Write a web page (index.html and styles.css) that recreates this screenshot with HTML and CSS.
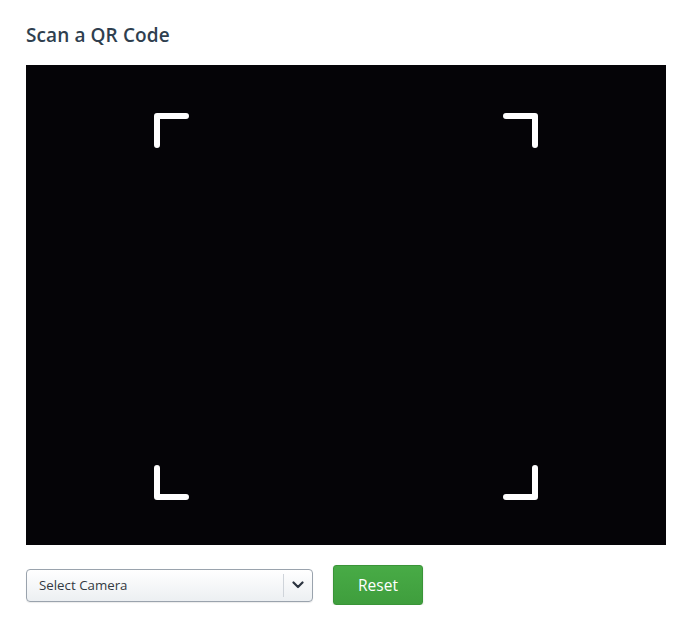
FILE: index.html
```html
<!DOCTYPE html>
<html>
<head>
<meta charset="utf-8">
<link rel="stylesheet" href="styles.css">
</head>
<body>
<div class="page">
  <h1 class="title">Scan a QR Code</h1>
  <div class="viewer">
    <svg class="corner tl" width="35" height="35" viewBox="0 0 35 35"><path d="M3 32 V3 H32"/></svg>
    <svg class="corner tr" width="35" height="35" viewBox="0 0 35 35"><path d="M3 3 H32 V32"/></svg>
    <svg class="corner bl" width="35" height="35" viewBox="0 0 35 35"><path d="M3 3 V32 H32"/></svg>
    <svg class="corner br" width="35" height="35" viewBox="0 0 35 35"><path d="M3 32 H32 V3"/></svg>
  </div>
  <div class="controls">
    <div class="select">
      <span class="select-label">Select Camera</span>
      <span class="select-toggle">
        <svg width="12" height="8" viewBox="0 0 12 8"><path d="M1.5 1.5 L6 6 L10.5 1.5"/></svg>
      </span>
    </div>
    <button class="btn-reset">Reset</button>
  </div>
</div>
</body>
</html>
```
FILE: styles.css
```css
html, body {
  margin: 0;
  padding: 0;
  background: #ffffff;
}
.page {
  padding: 23px 26px 0 26px;
  font-family: "Open Sans", "Liberation Sans", sans-serif;
}
.title {
  margin: 0 0 18px 0;
  font-size: 19px;
  line-height: 24px;
  font-weight: 600;
  color: #2f3f4f;
  letter-spacing: 0.1px;
}
.viewer {
  position: relative;
  width: 640px;
  height: 480px;
  background: #050407;
}
.corner {
  position: absolute;
  display: block;
}
.corner path {
  fill: none;
  stroke: #ffffff;
  stroke-width: 6;
  stroke-linecap: round;
  stroke-linejoin: round;
}
.corner.tl { left: 128px; top: 48px; }
.corner.tr { right: 128px; top: 48px; }
.corner.bl { left: 128px; bottom: 45px; }
.corner.br { right: 128px; bottom: 45px; }
.controls {
  display: flex;
  align-items: center;
  gap: 20px;
  margin-top: 20px;
}
.select {
  box-sizing: border-box;
  width: 287px;
  height: 33px;
  display: flex;
  align-items: center;
  border: 1px solid #9aa3ad;
  border-radius: 4px;
  background: linear-gradient(#ffffff, #eceff2);
  box-shadow: 0 1px 1px rgba(0,0,0,0.08);
}
.select-label {
  flex: 1;
  padding-left: 12px;
  font-size: 13.3px;
  color: #333a42;
}
.select-toggle {
  width: 28px;
  height: 23px;
  border-left: 1px solid #cfd4da;
  display: flex;
  align-items: center;
  justify-content: center;
}
.select-toggle svg path {
  fill: none;
  stroke: #2c3440;
  stroke-width: 2.2;
  stroke-linecap: round;
  stroke-linejoin: round;
}
.btn-reset {
  box-sizing: border-box;
  width: 90px;
  height: 40px;
  border: 1px solid #3a9438;
  border-radius: 3px;
  background: linear-gradient(#48ab46, #3f9e3d);
  color: #ffffff;
  font-family: "Open Sans", "Liberation Sans", sans-serif;
  font-size: 15.5px;
  box-shadow: 0 1px 2px rgba(0,0,0,0.15);
  padding: 0;
}
```
